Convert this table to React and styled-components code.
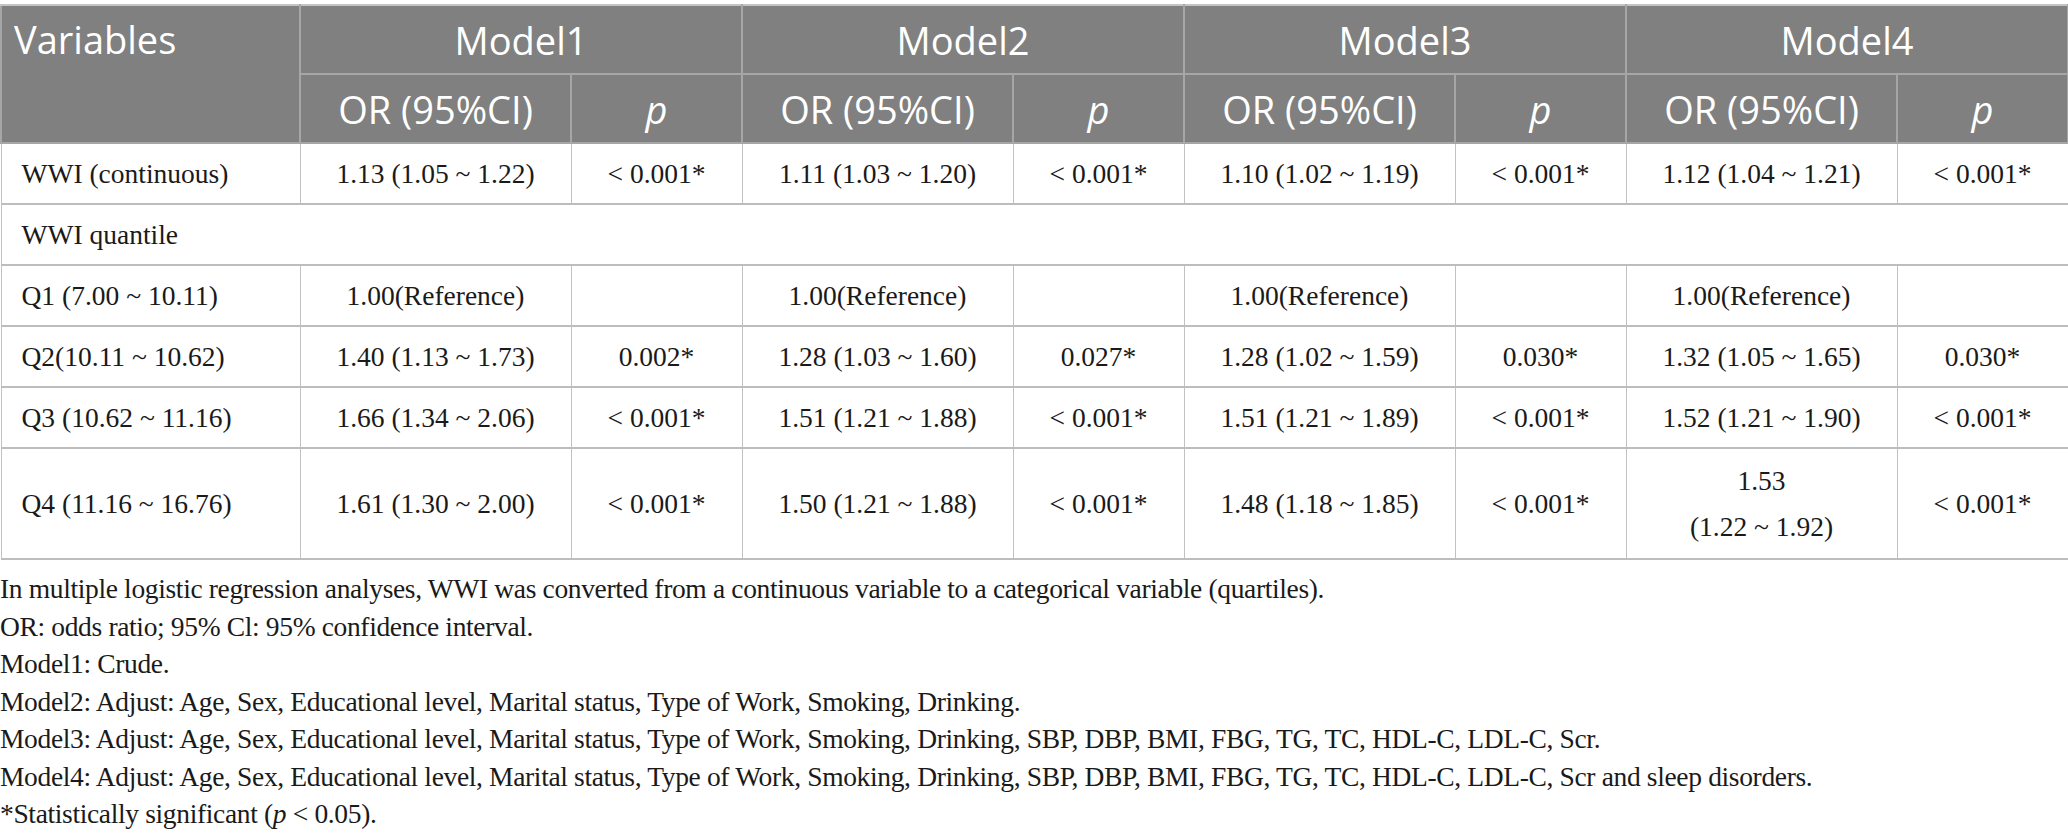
import styled, { createGlobalStyle } from 'styled-components';

const GlobalStyle = createGlobalStyle`
	html, body {
		margin: 0;
		padding: 0;
		background: #fff;
	}
`;

const models = [
	{
		name: 'Model1',
		continuous: ['1.13 (1.05 ~ 1.22)', '< 0.001*'],
		q: [
			['1.00(Reference)', ''],
			['1.40 (1.13 ~ 1.73)', '0.002*'],
			['1.66 (1.34 ~ 2.06)', '< 0.001*'],
			['1.61 (1.30 ~ 2.00)', '< 0.001*'],
		],
	},
	{
		name: 'Model2',
		continuous: ['1.11 (1.03 ~ 1.20)', '< 0.001*'],
		q: [
			['1.00(Reference)', ''],
			['1.28 (1.03 ~ 1.60)', '0.027*'],
			['1.51 (1.21 ~ 1.88)', '< 0.001*'],
			['1.50 (1.21 ~ 1.88)', '< 0.001*'],
		],
	},
	{
		name: 'Model3',
		continuous: ['1.10 (1.02 ~ 1.19)', '< 0.001*'],
		q: [
			['1.00(Reference)', ''],
			['1.28 (1.02 ~ 1.59)', '0.030*'],
			['1.51 (1.21 ~ 1.89)', '< 0.001*'],
			['1.48 (1.18 ~ 1.85)', '< 0.001*'],
		],
	},
	{
		name: 'Model4',
		continuous: ['1.12 (1.04 ~ 1.21)', '< 0.001*'],
		q: [
			['1.00(Reference)', ''],
			['1.32 (1.05 ~ 1.65)', '0.030*'],
			['1.52 (1.21 ~ 1.90)', '< 0.001*'],
			['1.53\n(1.22 ~ 1.92)', '< 0.001*'],
		],
	},
];

const quantiles = [
	'Q1 (7.00 ~ 10.11)',
	'Q2(10.11 ~ 10.62)',
	'Q3 (10.62 ~ 11.16)',
	'Q4 (11.16 ~ 16.76)',
];

const notes = [
	'In multiple logistic regression analyses, WWI was converted from a continuous variable to a categorical variable (quartiles).',
	'OR: odds ratio; 95% Cl: 95% confidence interval.',
	'Model1: Crude.',
	'Model2: Adjust: Age, Sex, Educational level, Marital status, Type of Work, Smoking, Drinking.',
	'Model3: Adjust: Age, Sex, Educational level, Marital status, Type of Work, Smoking, Drinking, SBP, DBP, BMI, FBG, TG, TC, HDL-C, LDL-C, Scr.',
	'Model4: Adjust: Age, Sex, Educational level, Marital status, Type of Work, Smoking, Drinking, SBP, DBP, BMI, FBG, TG, TC, HDL-C, LDL-C, Scr and sleep disorders.',
];

const Wrapper = styled.div`
	width: 2068px;
	padding-top: 4px;
	font-family: 'Liberation Serif', 'Times New Roman', serif;
	color: #1a1a1a;
`;

const Table = styled.table`
	width: 2068px;
	border-collapse: collapse;
	table-layout: fixed;
`;

const HeadCell = styled.th`
	background: #808080;
	color: #fff;
	font-family: 'Open Sans', 'Liberation Sans', sans-serif;
	font-weight: 400;
	font-size: 38px;
	line-height: 46px;
	height: ${(p) => p.$h || 67}px;
	padding: 0 12px;
	text-align: ${(p) => (p.$left ? 'left' : 'center')};
	vertical-align: ${(p) => (p.$top ? 'top' : 'middle')};
	padding-top: ${(p) => (p.$top ? '10px' : '0')};
	border: 2px solid #a6a6a6;
	border-top-color: #c4c4c4;

	& i {
		font-style: italic;
	}
`;

const Cell = styled.td`
	font-size: 27.5px;
	height: ${(p) => p.$h || 59}px;
	padding: 0 20px;
	text-align: ${(p) => (p.$left ? 'left' : 'center')};
	vertical-align: middle;
	line-height: 46px;
	white-space: pre-line;
	border: 1px solid #c2c2c2;
	border-bottom: 2px solid #bdbdbd;
`;

const Notes = styled.div`
	padding: 10px 0 0 0;
	font-size: 27.5px;
	line-height: 37.5px;
	letter-spacing: -0.35px;
`;

const Note = styled.div`
	white-space: nowrap;
`;

export default function App() {
	return (
		<Wrapper>
			<GlobalStyle />
			<Table>
				<colgroup>
					<col style={{ width: 299 }} />
					{models.map((m) => [
						<col key={m.name + 'a'} style={{ width: 271 }} />,
						<col key={m.name + 'b'} style={{ width: 171 }} />,
					])}
				</colgroup>
				<thead>
					<tr>
						<HeadCell rowSpan={2} $left $top>
							Variables
						</HeadCell>
						{models.map((m) => (
							<HeadCell key={m.name} colSpan={2}>
								{m.name}
							</HeadCell>
						))}
					</tr>
					<tr>
						{models.map((m) => [
							<HeadCell key={m.name + 'or'}>OR (95%CI)</HeadCell>,
							<HeadCell key={m.name + 'p'}>
								<i>p</i>
							</HeadCell>,
						])}
					</tr>
				</thead>
				<tbody>
					<tr>
						<Cell $left>WWI (continuous)</Cell>
						{models.map((m) => [
							<Cell key={m.name + 'c0'}>{m.continuous[0]}</Cell>,
							<Cell key={m.name + 'c1'}>{m.continuous[1]}</Cell>,
						])}
					</tr>
					<tr>
						<Cell $left colSpan={9}>
							WWI quantile
						</Cell>
					</tr>
					{quantiles.map((label, i) => (
						<tr key={label}>
							<Cell $left $h={i === 3 ? 109 : 59}>
								{label}
							</Cell>
							{models.map((m) => [
								<Cell key={m.name + 'o'}>{m.q[i][0]}</Cell>,
								<Cell key={m.name + 'p'}>{m.q[i][1]}</Cell>,
							])}
						</tr>
					))}
				</tbody>
			</Table>
			<Notes>
				{notes.map((n) => (
					<Note key={n}>{n}</Note>
				))}
				<Note>
					*Statistically significant (<i>p</i> &lt; 0.05).
				</Note>
			</Notes>
		</Wrapper>
	);
}
